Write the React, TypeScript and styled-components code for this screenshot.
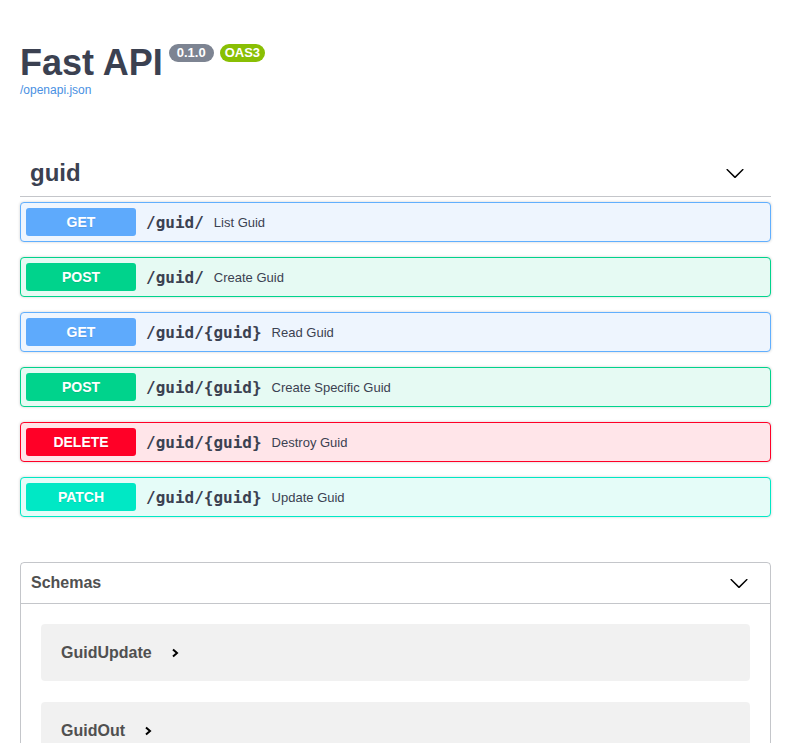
import React from "react";
import styled, { createGlobalStyle } from "styled-components";

const Global = createGlobalStyle`
  html, body { margin: 0; padding: 0; background: #fff; }
  body { font-family: "Liberation Sans", Arial, sans-serif; color: #3b4151; }
  * { box-sizing: border-box; }
`;

type Method = "GET" | "POST" | "DELETE" | "PATCH";

const palette: Record<Method, { badge: string; border: string; bg: string }> = {
  GET: { badge: "#5eaafc", border: "#61affe", bg: "#eef5fe" },
  POST: { badge: "#00d38c", border: "#00d38c", bg: "#e6faf3" },
  DELETE: { badge: "#ff0027", border: "#ff0027", bg: "#ffe5e9" },
  PATCH: { badge: "#00e8c5", border: "#00e8c5", bg: "#e5fcf8" },
};

const Page = styled.div`
  padding: 0 16px 40px 20px;
`;

const Info = styled.div`
  padding-top: 41px;
  margin-bottom: 53px;
`;

const TitleRow = styled.div`
  display: flex;
  align-items: flex-start;
`;

const Title = styled.h1`
  margin: 0;
  font-size: 36px;
  line-height: 44px;
  font-weight: 700;
  color: #3b4151;
`;

const Badge = styled.span<{ $bg: string; $pad: number }>`
  display: inline-flex;
  align-items: center;
  height: 18px;
  margin: 3px 0 0 6px;
  padding: 0 ${(p) => p.$pad}px;
  border-radius: 57px;
  background: ${(p) => p.$bg};
  color: #fff;
  font-size: 13px;
  font-weight: 700;
  line-height: 18px;
`;

const Link = styled.a`
  display: block;
  margin-top: -2px;
  font-size: 12px;
  line-height: 14px;
  color: #4990e2;
  text-decoration: none;
`;

const TagHeader = styled.div`
  display: flex;
  align-items: center;
  justify-content: space-between;
  height: 47px;
  padding: 0 26px 0 10px;
  border-bottom: 1px solid rgba(59, 65, 81, 0.3);
  margin-bottom: 5px;
`;

const TagName = styled.h3`
  margin: 0;
  font-size: 24px;
  font-weight: 700;
  color: #3b4151;
`;

const OpBlock = styled.div<{ $m: Method }>`
  display: flex;
  align-items: center;
  height: 40px;
  padding: 0 5px;
  margin-bottom: 15px;
  border: 1px solid ${(p) => palette[p.$m].border};
  background: ${(p) => palette[p.$m].bg};
  border-radius: 4px;
  box-shadow: 0 0 3px rgba(0, 0, 0, 0.19);
`;

const MethodBadge = styled.span<{ $m: Method }>`
  display: inline-flex;
  align-items: center;
  justify-content: center;
  width: 110px;
  height: 28px;
  border-radius: 3px;
  background: ${(p) => palette[p.$m].badge};
  color: #fff;
  font-size: 14px;
  font-weight: 700;
  text-shadow: 0 1px 0 rgba(0, 0, 0, 0.1);
`;

const Path = styled.span`
  padding: 0 10px;
  font-family: "DejaVu Sans Mono", "Liberation Mono", monospace;
  font-weight: 700;
  font-size: 16px;
  color: #3b4151;
`;

const Summary = styled.span`
  font-size: 13px;
  color: #3b4151;
`;

const Models = styled.section`
  margin-top: 45px;
  border: 1px solid rgba(59, 65, 81, 0.3);
  border-radius: 4px;
  padding-bottom: 20px;
`;

const ModelsHeader = styled.div`
  display: flex;
  align-items: center;
  justify-content: space-between;
  height: 41px;
  padding: 0 21px 0 10px;
  border-bottom: 1px solid rgba(59, 65, 81, 0.3);
`;

const ModelsTitle = styled.h4`
  margin: 0;
  font-size: 16px;
  font-weight: 700;
  color: #505050;
`;

const ModelList = styled.div`
  display: flex;
  flex-direction: column;
  gap: 21px;
  padding: 20px 20px 0;
`;

const ModelBox = styled.div`
  display: flex;
  align-items: center;
  gap: 19px;
  height: 57px;
  padding: 0 20px;
  background: rgba(0, 0, 0, 0.055);
  border-radius: 4px;
`;

const ModelName = styled.span`
  font-size: 16px;
  font-weight: 700;
  color: #505050;
`;

const Chevron = ({ size = 20 }: { size?: number }) => (
  <svg width={size} height={size} viewBox="0 0 20 20" fill="#000">
    <path d="M17.418 6.109c.272-.268.709-.268.979 0s.271.701 0 .969l-7.908 7.83c-.27.268-.707.268-.979 0l-7.908-7.83c-.27-.268-.27-.701 0-.969.271-.268.709-.268.979 0L10 13.25l7.418-7.141z" />
  </svg>
);

const Arrow = () => (
  <svg width="8" height="10" viewBox="0 0 8 10">
    <polyline points="2,1.5 6,5 2,8.5" fill="none" stroke="#000" strokeWidth="2" />
  </svg>
);

const ops: { m: Method; path: string; summary: string }[] = [
  { m: "GET", path: "/guid/", summary: "List Guid" },
  { m: "POST", path: "/guid/", summary: "Create Guid" },
  { m: "GET", path: "/guid/{guid}", summary: "Read Guid" },
  { m: "POST", path: "/guid/{guid}", summary: "Create Specific Guid" },
  { m: "DELETE", path: "/guid/{guid}", summary: "Destroy Guid" },
  { m: "PATCH", path: "/guid/{guid}", summary: "Update Guid" },
];

export default function App() {
  return (
    <Page>
      <Global />
      <Info>
        <TitleRow>
          <Title>Fast API</Title>
          <Badge $bg="#7d8492" $pad={8}>0.1.0</Badge>
          <Badge $bg="#89bf04" $pad={5}>OAS3</Badge>
        </TitleRow>
        <Link href="#">/openapi.json</Link>
      </Info>
      <TagHeader>
        <TagName>guid</TagName>
        <Chevron />
      </TagHeader>
      {ops.map((o, i) => (
        <OpBlock key={i} $m={o.m}>
          <MethodBadge $m={o.m}>{o.m}</MethodBadge>
          <Path>{o.path}</Path>
          <Summary>{o.summary}</Summary>
        </OpBlock>
      ))}
      <Models>
        <ModelsHeader>
          <ModelsTitle>Schemas</ModelsTitle>
          <Chevron />
        </ModelsHeader>
        <ModelList>
          <ModelBox>
            <ModelName>GuidUpdate</ModelName>
            <Arrow />
          </ModelBox>
          <ModelBox>
            <ModelName>GuidOut</ModelName>
            <Arrow />
          </ModelBox>
        </ModelList>
      </Models>
    </Page>
  );
}
